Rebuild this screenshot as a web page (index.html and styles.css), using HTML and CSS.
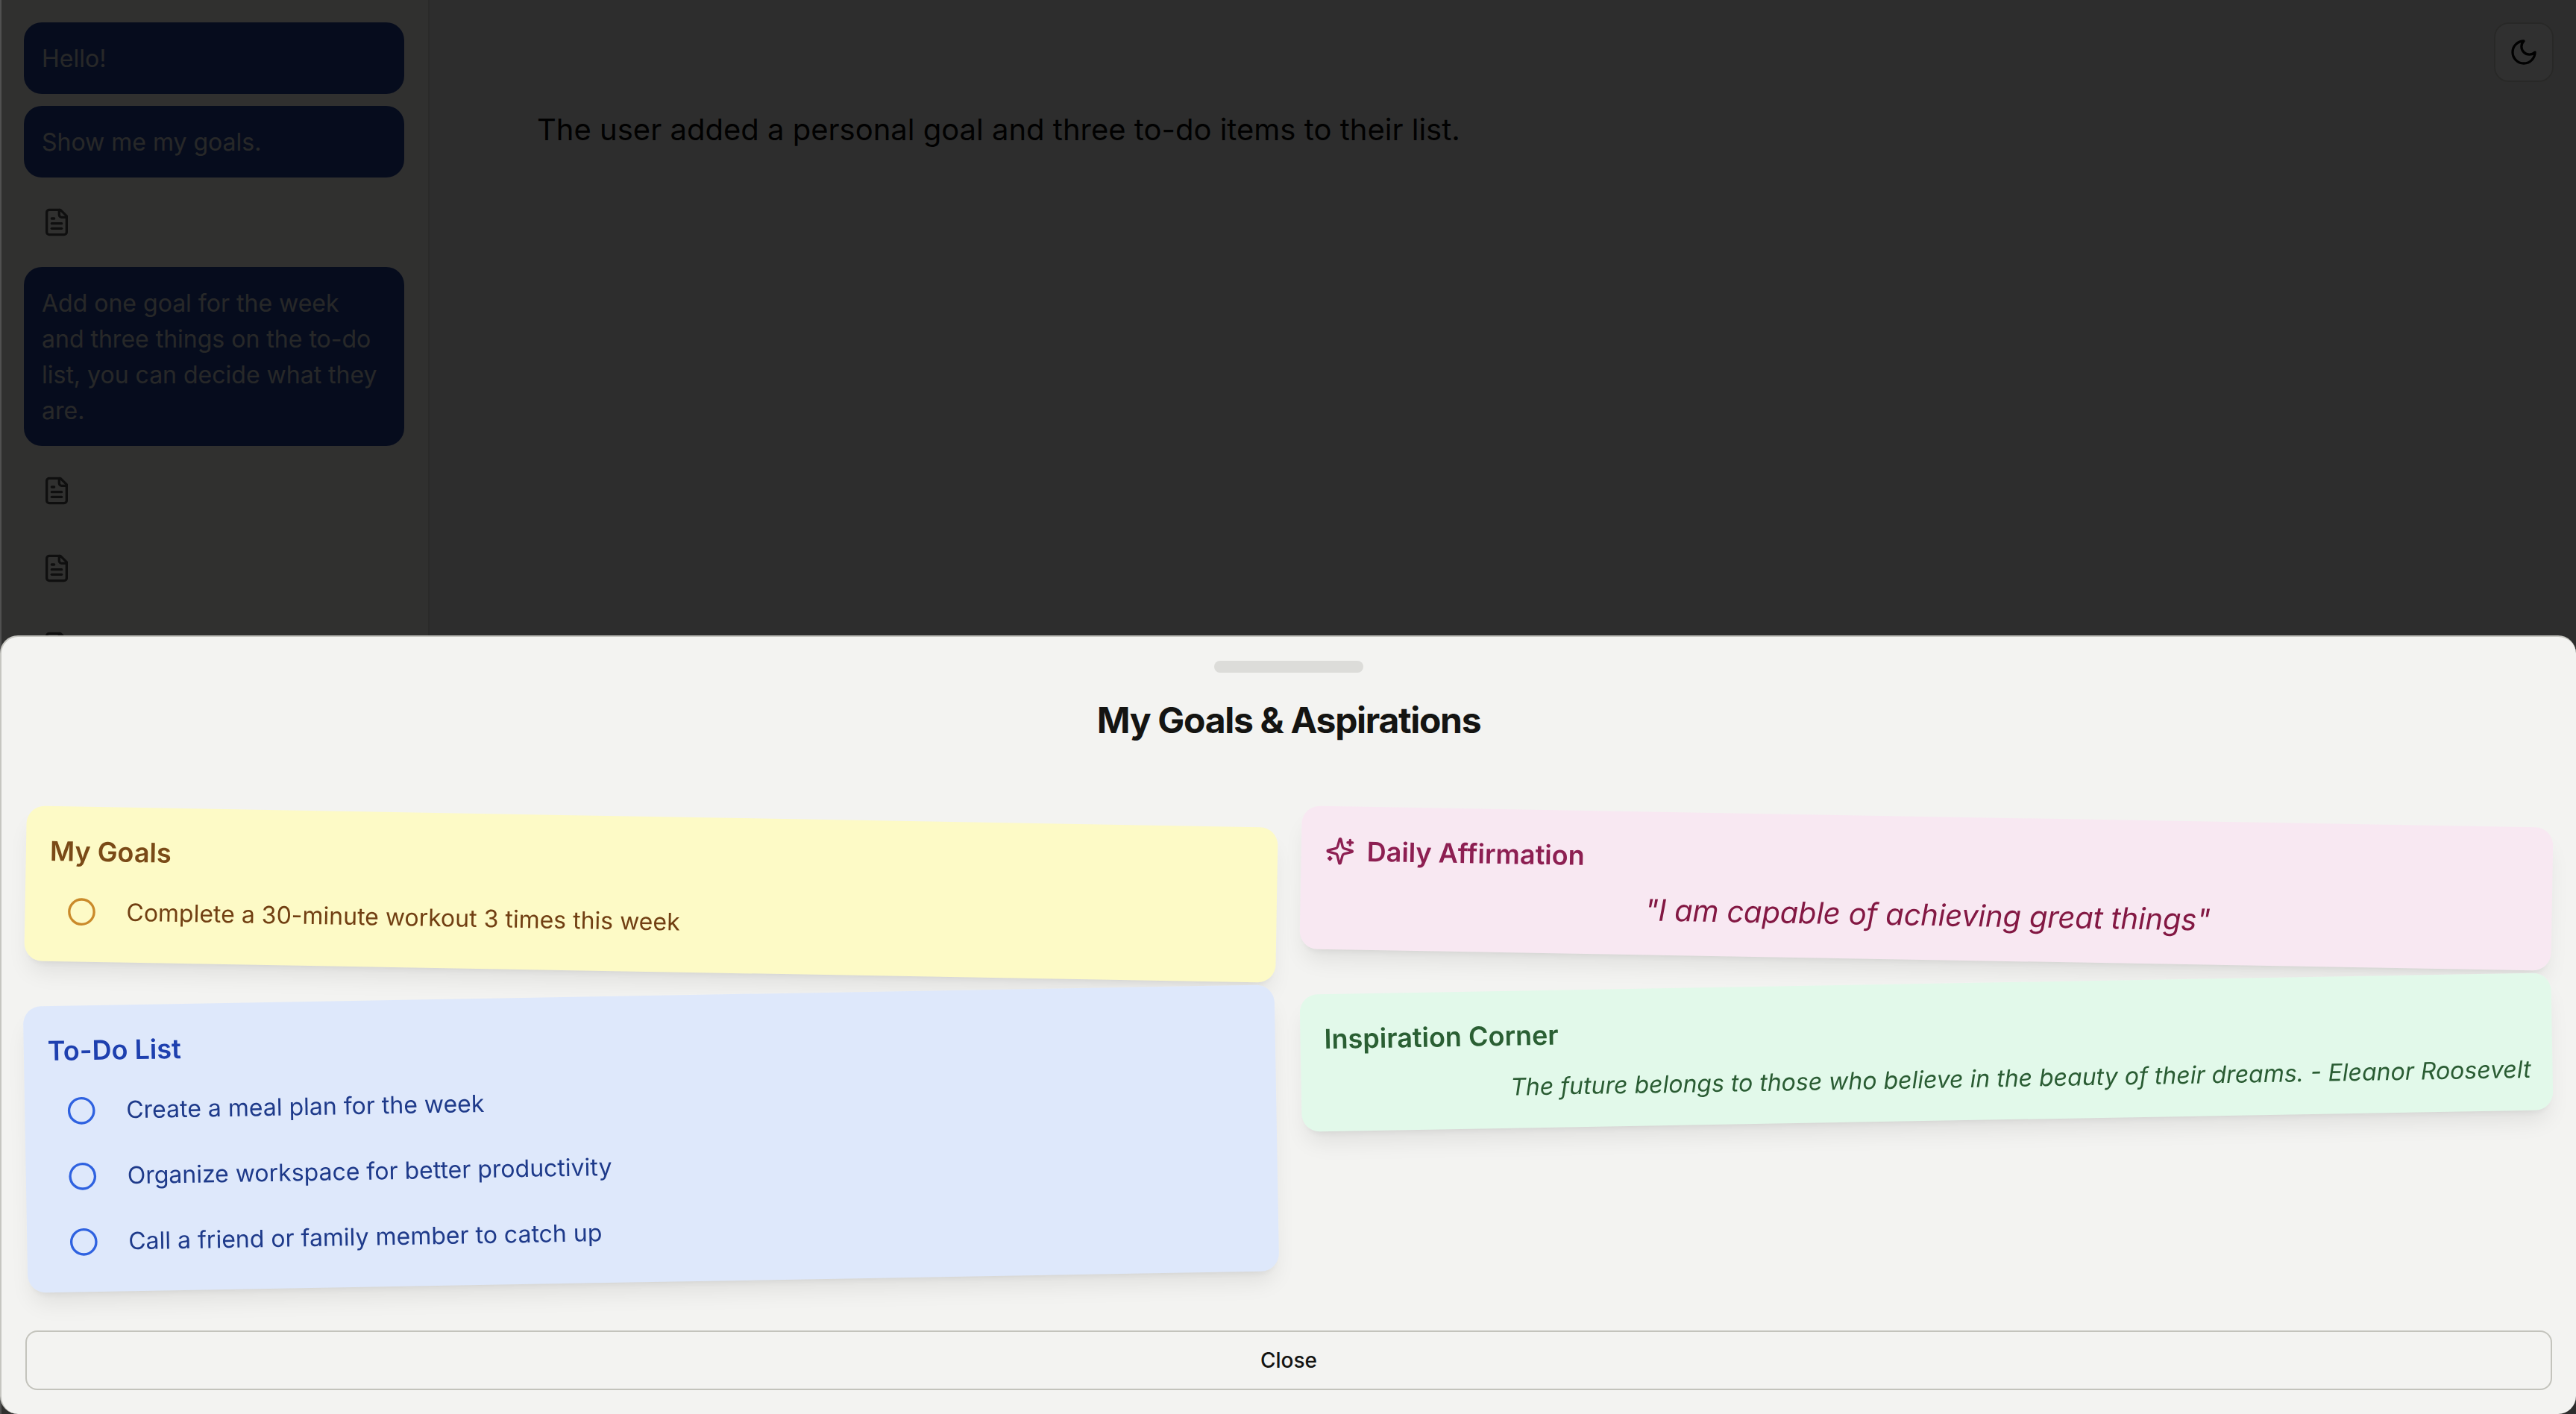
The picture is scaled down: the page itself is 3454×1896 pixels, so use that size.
FILE: index.html
```html
<!DOCTYPE html>
<html lang="en">
<head>
<meta charset="utf-8">
<title>My Goals &amp; Aspirations</title>
<link rel="stylesheet" href="styles.css">
</head>
<body>
<div class="app">
  <aside class="sidebar">
    <div class="bubble">Hello!</div>
    <div class="bubble">Show me my goals.</div>
    <div class="tool"><svg class="doc" viewBox="0 0 24 24"><path d="M15 2H6a2 2 0 0 0-2 2v16a2 2 0 0 0 2 2h12a2 2 0 0 0 2-2V7Z"/><path d="M14 2v4a2 2 0 0 0 2 2h4"/><path d="M10 9H8"/><path d="M16 13H8"/><path d="M16 17H8"/></svg></div>
    <div class="bubble">Add one goal for the week and three things on the to-do list, you can decide what they are.</div>
    <div class="tool"><svg class="doc" viewBox="0 0 24 24"><path d="M15 2H6a2 2 0 0 0-2 2v16a2 2 0 0 0 2 2h12a2 2 0 0 0 2-2V7Z"/><path d="M14 2v4a2 2 0 0 0 2 2h4"/><path d="M10 9H8"/><path d="M16 13H8"/><path d="M16 17H8"/></svg></div>
    <div class="tool"><svg class="doc" viewBox="0 0 24 24"><path d="M15 2H6a2 2 0 0 0-2 2v16a2 2 0 0 0 2 2h12a2 2 0 0 0 2-2V7Z"/><path d="M14 2v4a2 2 0 0 0 2 2h4"/><path d="M10 9H8"/><path d="M16 13H8"/><path d="M16 17H8"/></svg></div>
    <div class="tool"><svg class="doc" viewBox="0 0 24 24"><path d="M15 2H6a2 2 0 0 0-2 2v16a2 2 0 0 0 2 2h12a2 2 0 0 0 2-2V7Z"/><path d="M14 2v4a2 2 0 0 0 2 2h4"/><path d="M10 9H8"/><path d="M16 13H8"/><path d="M16 17H8"/></svg></div>
  </aside>
  <main class="main">
    <p class="summary">The user added a personal goal and three to-do items to their list.</p>
    <button class="theme" type="button" aria-label="Toggle theme"><svg class="moon" viewBox="0 0 24 24"><path d="M12 3a6 6 0 0 0 9 9 9 9 0 1 1-9-9Z"/></svg></button>
  </main>
</div>
<div class="overlay"></div>
<section class="sheet">
  <div class="handle"></div>
  <h1 class="sheet-title">My Goals &amp; Aspirations</h1>
  <div class="board">
    <div class="col">
      <div class="card card-goals">
        <h2 class="card-title">My Goals</h2>
        <ul class="items">
          <li class="item"><svg class="ring" viewBox="0 0 24 24"><circle cx="12" cy="12" r="10"/></svg><span>Complete a 30-minute workout 3 times this week</span></li>
        </ul>
      </div>
      <div class="card card-todo">
        <h2 class="card-title">To-Do List</h2>
        <ul class="items">
          <li class="item"><svg class="ring" viewBox="0 0 24 24"><circle cx="12" cy="12" r="10"/></svg><span>Create a meal plan for the week</span></li>
          <li class="item"><svg class="ring" viewBox="0 0 24 24"><circle cx="12" cy="12" r="10"/></svg><span>Organize workspace for better productivity</span></li>
          <li class="item"><svg class="ring" viewBox="0 0 24 24"><circle cx="12" cy="12" r="10"/></svg><span>Call a friend or family member to catch up</span></li>
        </ul>
      </div>
    </div>
    <div class="col">
      <div class="card card-affirm">
        <h2 class="card-title with-icon"><svg class="sparkles" viewBox="0 0 24 24"><path d="M9.937 15.5A2 2 0 0 0 8.5 14.063l-6.135-1.582a.5.5 0 0 1 0-.962L8.5 9.936A2 2 0 0 0 9.937 8.5l1.582-6.135a.5.5 0 0 1 .963 0L14.063 8.5A2 2 0 0 0 15.5 9.937l6.135 1.581a.5.5 0 0 1 0 .964L15.5 14.063a2 2 0 0 0-1.437 1.437l-1.582 6.135a.5.5 0 0 1-.963 0z"/><path d="M20 3v4"/><path d="M22 5h-4"/><path d="M4 17v2"/><path d="M5 18H3"/></svg>Daily Affirmation</h2>
        <p class="affirmation">"I am capable of achieving great things"</p>
      </div>
      <div class="card card-inspire">
        <h2 class="card-title">Inspiration Corner</h2>
        <p class="quote">The future belongs to those who believe in the beauty of their dreams. - Eleanor Roosevelt</p>
      </div>
    </div>
  </div>
  <button class="close" type="button">Close</button>
</section>
</body>
</html>
```
FILE: styles.css
```css
* { box-sizing: border-box; }
html, body { margin: 0; height: 100%; }
body {
  overflow: hidden;
  background: #1e1208;
  font-family: Inter, "Liberation Sans", sans-serif;
  color: #0a0a0a;
}
.app {
  display: flex;
  height: 1896px;
  background: #f0f0ed;
}
.sidebar {
  width: 576px;
  height: 100%;
  flex: none;
  padding: 30px 32px 0;
  display: flex;
  flex-direction: column;
  gap: 16px;
  overflow: hidden;
  background: #fffffa;
  border-right: 2px solid #dcdcd8;
}
.bubble {
  padding: 25px 24px 23px;
  border-radius: 24px;
  background: #24439a;
  color: #d0d1d5;
  font-size: 32px;
  line-height: 48px;
}
.tool { padding: 24px; flex: none; height: 88px; }
.doc {
  display: block;
  width: 40px;
  height: 40px;
  fill: none;
  stroke: #505050;
  stroke-width: 2;
  stroke-linecap: round;
  stroke-linejoin: round;
}
.main {
  flex: 1;
  position: relative;
  padding: 142px 144px;
}
.summary {
  margin: 0;
  font-size: 40px;
  line-height: 64px;
  color: #0a0a0a;
}
.theme {
  position: absolute;
  top: 30px;
  right: 30px;
  width: 80px;
  height: 80px;
  padding: 0;
  display: flex;
  align-items: center;
  justify-content: center;
  border: 2px solid #d6d6d0;
  border-radius: 20px;
  background: #ffffff;
}
.moon {
  width: 40px;
  height: 40px;
  fill: none;
  stroke: #0a0a0a;
  stroke-width: 2;
  stroke-linecap: round;
  stroke-linejoin: round;
}
.overlay {
  position: fixed;
  inset: 0;
  background: rgba(0, 0, 0, 0.81);
  border-left: 2px solid #505050;
}
.sheet {
  position: fixed;
  left: 0;
  right: 0;
  bottom: 0;
  height: 1044px;
  padding: 0 32px 32px;
  display: flex;
  flex-direction: column;
  background: #f3f3f1;
  border: 2px solid #c6c6c1;
  border-bottom: 0;
  border-right: 0;
  border-radius: 24px;
}
.handle {
  flex: none;
  width: 200px;
  height: 16px;
  margin: 32px auto 0;
  border-radius: 8px;
  background: #dcdcd9;
}
.sheet-title {
  margin: 32px 0 0;
  text-align: center;
  font-size: 48px;
  line-height: 64px;
  font-weight: 750;
  letter-spacing: -1.3px;
  color: #141412;
}
.board {
  flex: 1;
  margin-top: 97px;
  display: grid;
  grid-template-columns: 1fr 1fr;
  gap: 32px;
  align-items: start;
}
.col { display: flex; flex-direction: column; gap: 32px; }
.card {
  padding: 32px;
  border-radius: 24px;
  box-shadow: 0 20px 30px -6px rgba(0, 0, 0, 0.08), 0 8px 12px -8px rgba(0, 0, 0, 0.1);
}
.card-goals { background: #fdfac6; color: #7a4a17; transform: rotate(1deg); --ring: #ca8a2a; --text: #713f12; }
.card-todo { background: #deE8fb; color: #1e40af; transform: rotate(-1deg); --ring: #2f62e0; --text: #1e3a8a; }
.card-affirm { background: #f8e8f2; color: #8d1f52; transform: rotate(1deg); }
.card-inspire { background: #e2f9ea; color: #2a5f33; transform: rotate(-1deg); }
.card-title {
  margin: 0;
  font-size: 36px;
  line-height: 56px;
  font-weight: 600;
}
.with-icon { display: flex; align-items: center; gap: 16px; }
.sparkles {
  width: 40px;
  height: 40px;
  fill: none;
  stroke: currentColor;
  stroke-width: 2;
  stroke-linecap: round;
  stroke-linejoin: round;
}
.items {
  list-style: none;
  margin: 17px 0 -1px;
  padding: 0;
  display: flex;
  flex-direction: column;
  gap: 16px;
}
.item {
  display: flex;
  align-items: center;
  gap: 40px;
  padding: 12px 24px;
  font-size: 32px;
  line-height: 48px;
  color: var(--text);
}
.ring {
  flex: none;
  width: 40px;
  height: 40px;
  fill: none;
  stroke: var(--ring);
  stroke-width: 2;
}
.affirmation {
  margin: 16px 0 0;
  padding-left: 4px;
  text-align: center;
  font-size: 40px;
  line-height: 56px;
  font-style: italic;
  letter-spacing: -0.2px;
  color: #831843;
}
.quote {
  margin: 17px -3px -1px 0;
  text-align: right;
  font-size: 32px;
  line-height: 48px;
  font-style: italic;
  color: #2a5c33;
}
.close {
  flex: none;
  height: 80px;
  border: 2px solid #c3c3bc;
  border-radius: 16px;
  background: transparent;
  font-family: inherit;
  font-size: 28px;
  font-weight: 500;
  color: #141412;
}
```
